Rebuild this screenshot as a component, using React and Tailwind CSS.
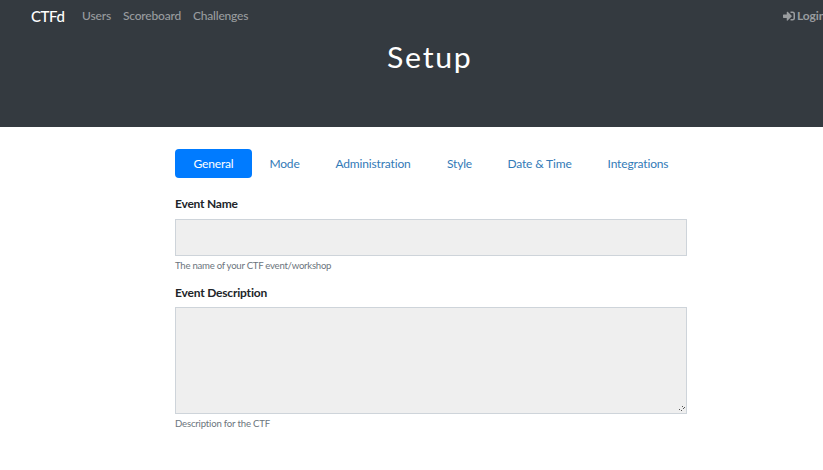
import { FaSignInAlt } from "react-icons/fa";

const tabs = [
  { label: "General", width: "w-[77px]" },
  { label: "Mode", width: "w-[65px]" },
  { label: "Administration", width: "w-[112px]" },
  { label: "Style", width: "w-[61px]" },
  { label: "Date & Time", width: "w-[99px]" },
  { label: "Integrations", width: "w-[98px]" },
];

export default function App() {
  return (
    <div className="h-[470px] w-full overflow-hidden bg-white font-['Lato',sans-serif] text-[12px] text-[#212529]">
      <header className="h-[127px] bg-[#343a40]">
        <nav className="flex h-8 items-center overflow-hidden pl-[31px] tracking-[-0.2px] whitespace-nowrap text-[#999c9f]">
          <a className="w-[51px] text-[15px] font-medium tracking-[-0.4px] text-white">CTFd</a>
          <a className="w-[41px] font-medium tracking-[-0.1px]">Users</a>
          <a className="w-[70px] font-medium">Scoreboard</a>
          <a className="font-medium">Challenges</a>
          <a className="-mr-2 ml-auto flex w-12 shrink-0 items-center gap-[2px] font-bold tracking-[-0.1px]">
            <FaSignInAlt className="size-3 shrink-0" />
            Login
          </a>
        </nav>
        <h1 className="ml-[387px] w-fit origin-left scale-x-[1.08] pt-[7px] text-[28px] leading-9 font-normal tracking-[1.6px] text-white">
          Setup
        </h1>
      </header>
      <main className="ml-[175px] w-[512px] pt-[22px]">
        <div className="flex h-[29px] tracking-[-0.16px] text-[#337ab7]">
          {tabs.map((tab, i) => (
            <a
              key={tab.label}
              className={`${tab.width} flex items-center justify-center whitespace-nowrap ${i === 0 ? "rounded-[4px] bg-[#007bff] text-white" : ""}`}
            >
              {tab.label}
            </a>
          ))}
        </div>
        <label className="mt-[17px] block h-6 leading-[18px] font-bold tracking-[-0.22px]">Event Name</label>
        <input className="block h-[37px] w-full border border-[#ced4da] bg-[#efefef]" />
        <small className="mt-[3px] block h-[14px] text-[9.6px] leading-[14px] tracking-[-0.26px] text-[#6c757d]">
          The name of your CTF event/workshop
        </small>
        <label className="mt-[11px] block h-[23px] leading-[18px] font-bold tracking-[-0.19px]">Event Description</label>
        <div className="relative">
          <textarea className="block h-[107px] w-full resize-none border border-[#ced4da] bg-[#efefef]" />
          <svg className="absolute right-[2px] bottom-[2px] size-[6px]" viewBox="0 0 6 6" fill="#555" shapeRendering="crispEdges">
            <path d="M3 0h1v1H3zM5 1h1v1H5zM4 2h1v1H4zM0 3h1v1H0zM2 4h1v1H2z" />
          </svg>
        </div>
        <small className="mt-[3px] block text-[9.6px] leading-[14px] tracking-[-0.19px] text-[#6c757d]">Description for the CTF</small>
      </main>
    </div>
  );
}
